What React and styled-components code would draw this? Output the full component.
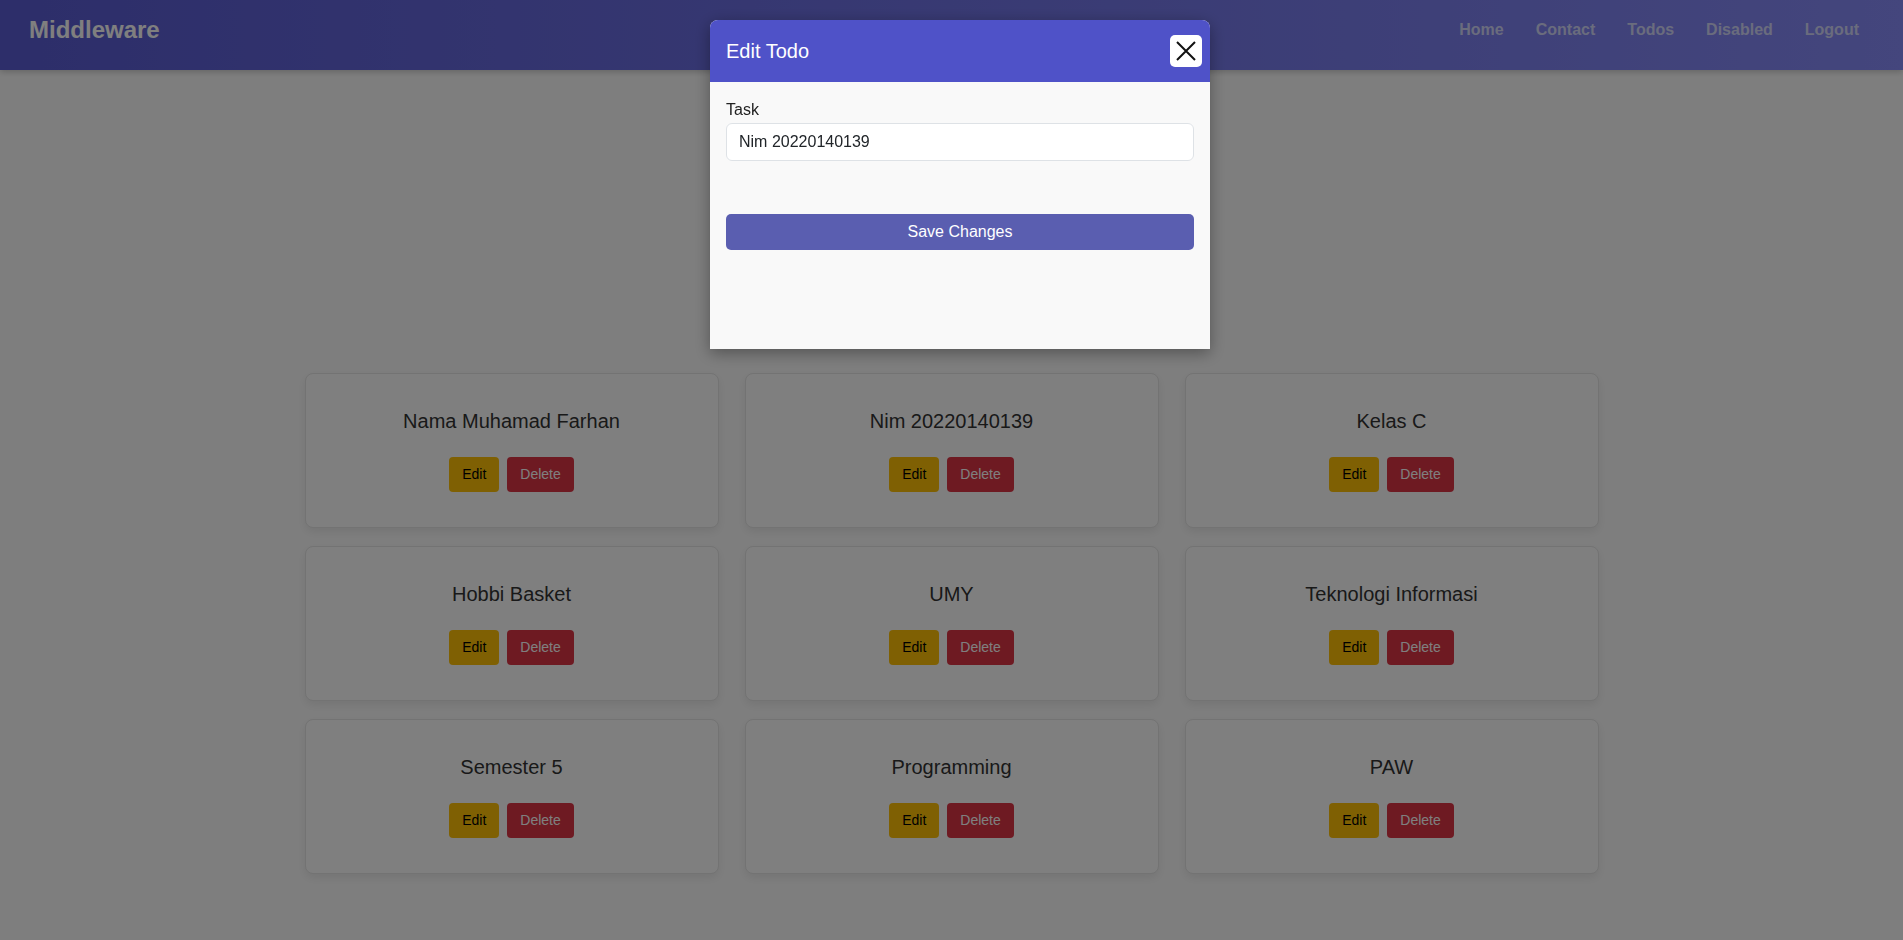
import React from "react";
import styled, { createGlobalStyle } from "styled-components";

const todos = [
    "Nama Muhamad Farhan",
    "Nim 20220140139",
    "Kelas C",
    "Hobbi Basket",
    "UMY",
    "Teknologi Informasi",
    "Semester 5",
    "Programming",
    "PAW",
];

const links = ["Home", "Contact", "Todos", "Disabled", "Logout"];

function App() {
    return (
        <>
            <GlobalStyle />
            <Page>
                <Navbar>
                    <Brand>Middleware</Brand>
                    <NavLinks>
                        {links.map((l) => (
                            <NavLink key={l} href="#">
                                {l}
                            </NavLink>
                        ))}
                    </NavLinks>
                </Navbar>
                <Main>
                    <Grid>
                        {todos.map((t) => (
                            <Card key={t}>
                                <CardTitle>{t}</CardTitle>
                                <Actions>
                                    <ActionButton $variant="edit">Edit</ActionButton>
                                    <ActionButton $variant="delete">Delete</ActionButton>
                                </Actions>
                            </Card>
                        ))}
                    </Grid>
                </Main>
            </Page>
            <Overlay>
                <Modal>
                    <ModalHeader>
                        <ModalTitle>Edit Todo</ModalTitle>
                        <CloseButton aria-label="close">
                            <svg width="20" height="20" viewBox="0 0 20 20">
                                <path
                                    d="M1 1 L19 19 M19 1 L1 19"
                                    stroke="#111"
                                    strokeWidth="2"
                                />
                            </svg>
                        </CloseButton>
                    </ModalHeader>
                    <ModalBody>
                        <Label>Task</Label>
                        <Input defaultValue="Nim 20220140139" />
                        <SaveButton>Save Changes</SaveButton>
                    </ModalBody>
                </Modal>
            </Overlay>
        </>
    );
}

export default App;

const GlobalStyle = createGlobalStyle`
    * {
        box-sizing: border-box;
    }
    body {
        margin: 0;
        font-family: "Liberation Sans", Arial, sans-serif;
        background: #fdfdfd;
        color: #333;
    }
`;

const Page = styled.div`
    min-height: 940px;
`;

const Navbar = styled.nav`
    height: 70px;
    display: flex;
    align-items: flex-start;
    justify-content: space-between;
    padding: 16px 44px 0 29px;
    background: linear-gradient(90deg, #5a5cd4, #888cfa);
    box-shadow: 0 2px 6px rgba(0, 0, 0, 0.2);
`;

const Brand = styled.div`
    color: #fff;
    font-size: 24px;
    line-height: 28px;
    font-weight: 700;
`;

const NavLinks = styled.div`
    display: flex;
    gap: 32px;
    padding-top: 5px;
`;

const NavLink = styled.a`
    color: #d4d8fb;
    font-size: 16px;
    line-height: 18px;
    font-weight: 700;
    text-decoration: none;
`;

const Main = styled.main`
    padding: 303px 0 60px;
    display: flex;
    justify-content: center;
`;

const Grid = styled.div`
    display: grid;
    grid-template-columns: repeat(3, 414px);
    column-gap: 26px;
    row-gap: 18px;
`;

const Card = styled.div`
    height: 155px;
    background: #fff;
    border: 1px solid #e6e6e6;
    border-radius: 8px;
    box-shadow: 0 4px 10px rgba(0, 0, 0, 0.08);
    padding: 35px 20px 0;
    display: flex;
    flex-direction: column;
    align-items: center;
`;

const CardTitle = styled.h3`
    margin: 0 0 24px;
    font-size: 20px;
    font-weight: 400;
    line-height: 24px;
    color: #333;
`;

const Actions = styled.div`
    display: flex;
    gap: 8px;
`;

const ActionButton = styled.button`
    border: none;
    border-radius: 4px;
    padding: 8px 13px;
    font-family: inherit;
    font-size: 14px;
    line-height: 19px;
    background: ${(p) => (p.$variant === "edit" ? "#ffc107" : "#dc3545")};
    color: ${(p) => (p.$variant === "edit" ? "#000" : "#fff")};
`;

const Overlay = styled.div`
    position: fixed;
    inset: 0;
    background: rgba(0, 0, 0, 0.5);
    display: flex;
    justify-content: center;
    align-items: flex-start;
    padding: 20px 0 0 17px;
`;

const Modal = styled.div`
    width: 500px;
    height: 329px;
    background: #f9f9f9;
    border-radius: 8px 8px 0 0;
    box-shadow: 0 4px 16px rgba(0, 0, 0, 0.35);
    overflow: hidden;
`;

const ModalHeader = styled.div`
    height: 62px;
    background: #4f52c8;
    display: flex;
    align-items: center;
    justify-content: space-between;
    padding: 0 8px 0 16px;
`;

const ModalTitle = styled.h2`
    margin: 0;
    color: #fff;
    font-size: 20px;
    font-weight: 400;
`;

const CloseButton = styled.button`
    width: 32px;
    height: 32px;
    border: none;
    border-radius: 5px;
    background: #fff;
    display: flex;
    align-items: center;
    justify-content: center;
    padding: 0;
`;

const ModalBody = styled.div`
    padding: 16px;
    display: flex;
    flex-direction: column;
`;

const Label = styled.label`
    font-size: 16px;
    line-height: 24px;
    margin-bottom: 1px;
    color: #222;
`;

const Input = styled.input`
    height: 38px;
    border: 1px solid #dee2e6;
    border-radius: 6px;
    background: #fff;
    padding: 0 12px;
    font-family: inherit;
    font-size: 16px;
    color: #212529;
    outline: none;
`;

const SaveButton = styled.button`
    margin-top: 53px;
    height: 36px;
    border: none;
    border-radius: 5px;
    background: #5a5eb0;
    color: #fff;
    font-family: inherit;
    font-size: 16px;
`;
